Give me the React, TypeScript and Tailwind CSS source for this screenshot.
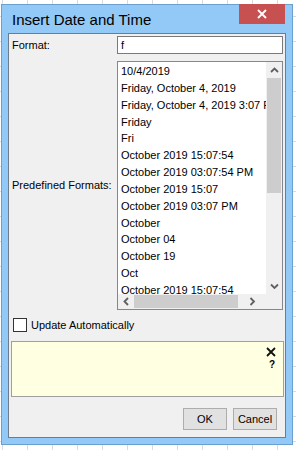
import React from "react";

const items = [
  "10/4/2019",
  "Friday, October 4, 2019",
  "Friday, October 4, 2019 3:07 PM",
  "Friday",
  "Fri",
  "October 2019 15:07:54",
  "October 2019 03:07:54 PM",
  "October 2019 15:07",
  "October 2019 03:07 PM",
  "October",
  "October 04",
  "October 19",
  "Oct",
  "October 2019 15:07:54",
];

function Chevron({ dir }: { dir: "up" | "down" | "left" | "right" }) {
  const d =
    dir === "up"
      ? "M1 5 L4.5 1.5 L8 5"
      : dir === "down"
      ? "M1 1.5 L4.5 5 L8 1.5"
      : dir === "left"
      ? "M5 1 L1.5 4.5 L5 8"
      : "M1.5 1 L5 4.5 L1.5 8";
  const w = dir === "up" || dir === "down" ? 9 : 7;
  const h = dir === "up" || dir === "down" ? 7 : 9;
  return (
    <svg width={w} height={h} viewBox={`0 0 ${w} ${h}`}>
      <path d={d} fill="none" stroke="#606060" strokeWidth="1.8" />
    </svg>
  );
}

export default function App() {
  return (
    <div
      className="w-[296px] h-[450px] overflow-hidden pl-[1px] pt-[4px] bg-white bg-[linear-gradient(to_right,#dadada_1px,transparent_1px),linear-gradient(to_bottom,#dadada_1px,transparent_1px)] bg-[size:25px_25px] bg-[position:2px_16px]"
      style={{ fontFamily: '"Liberation Sans", Arial, sans-serif' }}
    >
      <div className="w-[292px] h-[441px] bg-[#92c9f6] border border-[#6a9fcf] flex flex-col px-[6px] pb-[6px]">
        {/* title bar */}
        <div className="h-[28px] flex items-start shrink-0">
          <div className="pt-[5px] pl-[4px] text-[15px] leading-[20px] text-black flex-1">
            Insert Date and Time
          </div>
          <div className="w-[46px] h-[20px] bg-[#c75050] flex items-center justify-center -mt-[1px] mr-[1px]">
            <svg width="10" height="10" viewBox="0 0 10 10">
              <path d="M1 1 L9 9 M9 1 L1 9" stroke="white" strokeWidth="1.8" />
            </svg>
          </div>
        </div>
        {/* client */}
        <div className="flex-1 bg-[#f0f0f0] border border-[#6e7d8c] flex flex-col text-[11px] leading-[17px] text-black">
          <div className="flex items-center mt-[2px] h-[18px]">
            <div className="w-[108px] pl-[3px]">Format:</div>
            <div className="w-[166px] h-[18px] bg-white border border-[#7a7a7a] pl-[3px] leading-[16px]">
              f
            </div>
          </div>
          <div className="flex items-center mt-[7px]">
            <div className="w-[108px] pl-[3px]">Predefined Formats:</div>
            <div className="w-[166px] h-[249px] bg-white border border-[#828790] flex flex-col">
              <div className="flex h-[232px]">
                <div className="flex-1 overflow-hidden pl-[3px] pt-[1px] whitespace-nowrap leading-[16.85px]">
                  {items.map((t, i) => (
                    <div key={i}>{t}</div>
                  ))}
                </div>
                <div className="w-[16px] bg-[#f0f0f0] flex flex-col">
                  <div className="h-[16px] flex items-center justify-center">
                    <Chevron dir="up" />
                  </div>
                  <div className="h-[115px] bg-[#cdcdcd] mx-[1px]" />
                  <div className="flex-1 flex items-end justify-center pb-[4px]">
                    <Chevron dir="down" />
                  </div>
                </div>
              </div>
              <div className="flex h-[15px]">
                <div className="flex-1 bg-[#f0f0f0] flex items-center">
                  <div className="w-[16px] flex justify-center">
                    <Chevron dir="left" />
                  </div>
                  <div className="w-[104px] h-[13px] bg-[#cdcdcd]" />
                  <div className="flex-1 flex justify-center">
                    <Chevron dir="right" />
                  </div>
                </div>
                <div className="w-[16px] bg-[#f0f0f0]" />
              </div>
            </div>
          </div>
          <div className="flex items-center mt-[7px] pl-[4px] h-[16px]">
            <div className="w-[14px] h-[14px] bg-white border border-[#333333]" />
            <div className="pl-[4px]">Update Automatically</div>
          </div>
          <div className="mt-[8px] ml-[2px] w-[273px] h-[56px] bg-[#ffffe1] border border-[#a0a0a0] flex flex-col items-end pr-[7px] pt-[5px]">
            <svg width="10" height="10" viewBox="0 0 10 10">
              <path d="M1 1 L9 9 M9 1 L1 9" stroke="#111" strokeWidth="1.8" />
            </svg>
            <div className="text-[10px] font-bold leading-[12px] mt-[2px] pr-[1px]">?</div>
          </div>
          <div className="flex justify-end gap-[6px] mt-[11px] pr-[8px]">
            <div className="w-[44px] h-[22px] bg-[#e1e1e1] border border-[#adadad] flex items-center justify-center">
              OK
            </div>
            <div className="w-[44px] h-[22px] bg-[#e1e1e1] border border-[#adadad] flex items-center justify-center">
              Cancel
            </div>
          </div>
        </div>
      </div>
    </div>
  );
}
